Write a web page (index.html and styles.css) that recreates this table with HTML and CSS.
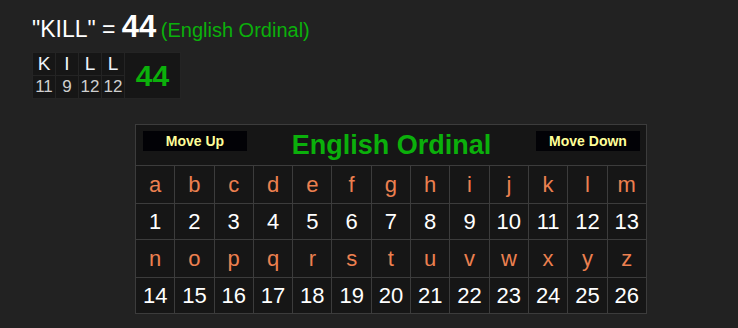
FILE: index.html
```html
<!DOCTYPE html>
<html lang="en">

<head>
  <meta charset="UTF-8">
  <meta name="viewport" content="width=device-width, initial-scale=1.0">
  <title>Gematria - KILL</title>
  <link rel="stylesheet" href="styles.css">
</head>

<body>
  <div class="page">
    <div class="phrase-line">
      <span class="phrase">"KILL" = </span><span class="phrase-total">44</span>
      <span class="cipher-name">(English Ordinal)</span>
    </div>

    <!-- letter by letter breakdown -->
    <table class="breakdown">
      <tr>
        <td class="bd-letter">K</td>
        <td class="bd-letter">I</td>
        <td class="bd-letter">L</td>
        <td class="bd-letter">L</td>
        <td class="bd-sum" rowspan="2">44</td>
      </tr>
      <tr>
        <td class="bd-value">11</td>
        <td class="bd-value">9</td>
        <td class="bd-value">12</td>
        <td class="bd-value">12</td>
      </tr>
    </table>

    <!-- cipher chart -->
    <table class="chart">
      <tr>
        <td class="chart-head" colspan="13">
          <div class="head-bar">
            <button class="move-btn">Move Up</button>
            <span class="chart-title">English Ordinal</span>
            <button class="move-btn">Move Down</button>
          </div>
        </td>
      </tr>
      <tr class="row-letters">
        <td>a</td><td>b</td><td>c</td><td>d</td><td>e</td><td>f</td><td>g</td>
        <td>h</td><td>i</td><td>j</td><td>k</td><td>l</td><td>m</td>
      </tr>
      <tr class="row-values">
        <td>1</td><td>2</td><td>3</td><td>4</td><td>5</td><td>6</td><td>7</td>
        <td>8</td><td>9</td><td>10</td><td>11</td><td>12</td><td>13</td>
      </tr>
      <tr class="row-letters">
        <td>n</td><td>o</td><td>p</td><td>q</td><td>r</td><td>s</td><td>t</td>
        <td>u</td><td>v</td><td>w</td><td>x</td><td>y</td><td>z</td>
      </tr>
      <tr class="row-values">
        <td>14</td><td>15</td><td>16</td><td>17</td><td>18</td><td>19</td><td>20</td>
        <td>21</td><td>22</td><td>23</td><td>24</td><td>25</td><td>26</td>
      </tr>
    </table>
  </div>
</body>

</html>
```

FILE: styles.css
```css
body {
  margin: 0;
  font-family: "Liberation Sans", Arial, sans-serif;
  background-color: #222222;
  color: #fff;
}

.page {
  padding: 10px 0 0 32px;
}

.phrase-line {
  height: 38px;
  line-height: 34px;
}

.phrase {
  font-size: 23px;
  color: #fff;
}

.phrase-total {
  font-size: 31px;
  font-weight: bold;
  color: #fff;
}

.cipher-name {
  font-size: 20px;
  color: #0bb00b;
}

.breakdown {
  margin-top: 4px;
  border-collapse: collapse;
  background-color: #161616;
  border: 1px solid #1e1e1e;
}

.breakdown td {
  border: 1px solid #242424;
  text-align: center;
  padding: 0;
}

.bd-letter {
  width: 22px;
  height: 22px;
  font-size: 19px;
  color: #eef4fa;
}

.bd-value {
  height: 22px;
  font-size: 17px;
  color: #cfcfcf;
}

.bd-sum {
  width: 55px;
  font-size: 30px;
  font-weight: bold;
  color: #0bb00b;
}

.chart {
  margin: 25px 0 0 103px;
  width: 512px;
  border-collapse: collapse;
  background-color: #161616;
  table-layout: fixed;
}

.chart td {
  border: 1px solid #3c3c3c;
  text-align: center;
  padding: 0;
  font-size: 22px;
}

.chart-head {
  height: 40px;
}

.head-bar {
  display: flex;
  justify-content: space-between;
  align-items: center;
  padding: 0 6px 0 7px;
}

.move-btn {
  width: 104px;
  height: 20px;
  border: none;
  padding: 0;
  background-color: #020206;
  color: #ffff99;
  font-family: "Liberation Sans", Arial, sans-serif;
  font-size: 14px;
  font-weight: bold;
  margin-top: 1px;
  margin-bottom: 9px;
}

.chart-title {
  font-size: 27px;
  font-weight: bold;
  color: #0bb00b;
}

.row-letters td {
  height: 37px;
  color: #ec8050;
}

.row-values td {
  height: 35px;
  color: #fff;
}
```
